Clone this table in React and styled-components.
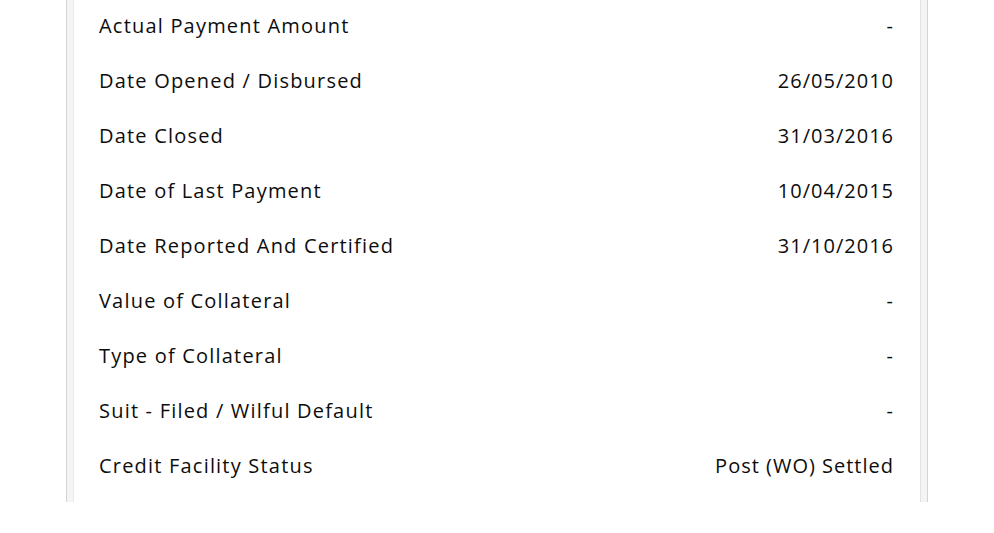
import React from "react";
import styled, { createGlobalStyle } from "styled-components";

const Global = createGlobalStyle`
  html, body { margin: 0; padding: 0; background: #ffffff; }
  body { font-family: "Open Sans", "Noto Sans", sans-serif; }
`;

const Page = styled.div`
  width: 994px;
  height: 533px;
  overflow: hidden;
  background: #fff;
  padding: 0 66px 0 66px;
  box-sizing: border-box;
`;

const Frame = styled.div`
  width: 862px;
  height: 502px;
  box-sizing: border-box;
  border-left: 1px solid #d4d4d4;
  border-right: 1px solid #d4d4d4;
  background: #f4f4f4;
  padding: 0 6px;
  display: flex;
  overflow: hidden;
`;

const Card = styled.div`
  flex: 1;
  background: #fff;
  border-left: 1px solid #ececec;
  border-right: 1px solid #e2e2e2;
  padding: 0 27px 0 25px;
  display: flex;
  flex-direction: column;
  margin-top: -2px;
`;

const Row = styled.div`
  height: 55px;
  flex-shrink: 0;
  display: flex;
  align-items: center;
  justify-content: space-between;
  font-size: 20px;
  color: #0d0d0d;
`;

const Label = styled.span`
  font-weight: 500;
  letter-spacing: 1.2px;
`;

const Value = styled.span`
  font-weight: 400;
  letter-spacing: 1px;
  margin-right: -1px;
`;

const rows = [
  ["Actual Payment Amount", "-"],
  ["Date Opened / Disbursed", "26/05/2010"],
  ["Date Closed", "31/03/2016"],
  ["Date of Last Payment", "10/04/2015"],
  ["Date Reported And Certified", "31/10/2016"],
  ["Value of Collateral", "-"],
  ["Type of Collateral", "-"],
  ["Suit - Filed / Wilful Default", "-"],
  ["Credit Facility Status", "Post (WO) Settled"],
];

export default function App() {
  return (
    <>
      <Global />
      <Page>
        <Frame>
          <Card>
            {rows.map(([l, v]) => (
              <Row key={l}>
                <Label>{l}</Label>
                <Value>{v}</Value>
              </Row>
            ))}
          </Card>
        </Frame>
      </Page>
    </>
  );
}
